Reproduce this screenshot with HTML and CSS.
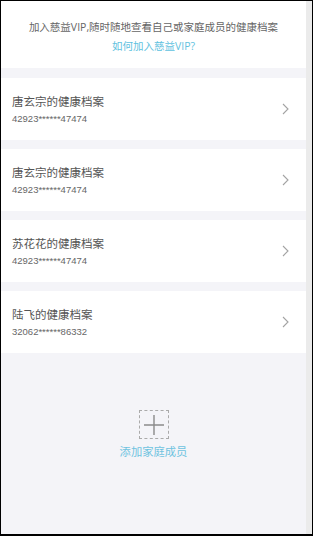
FILE: index.html
```html
<!DOCTYPE html>
<html lang="zh-CN">
<head>
<meta charset="utf-8">
<title>健康档案</title>
<link rel="stylesheet" href="styles.css">
</head>
<body>
<div class="frame">
  <div class="page">
    <div class="header">
      <p class="intro">加入慈益VIP,随时随地查看自己或家庭成员的健康档案</p>
      <p class="how">如何加入慈益VIP?</p>
    </div>
    <div class="list">
      <div class="card">
        <div class="info">
          <div class="name">唐玄宗的健康档案</div>
          <div class="id">42923******47474</div>
        </div>
        <svg class="chev" width="7" height="12" viewBox="0 0 7 12"><path d="M1 1 L6 6 L1 11" fill="none" stroke="#a3a3a3" stroke-width="1.1"/></svg>
      </div>
      <div class="card">
        <div class="info">
          <div class="name">唐玄宗的健康档案</div>
          <div class="id">42923******47474</div>
        </div>
        <svg class="chev" width="7" height="12" viewBox="0 0 7 12"><path d="M1 1 L6 6 L1 11" fill="none" stroke="#a3a3a3" stroke-width="1.1"/></svg>
      </div>
      <div class="card">
        <div class="info">
          <div class="name">苏花花的健康档案</div>
          <div class="id">42923******47474</div>
        </div>
        <svg class="chev" width="7" height="12" viewBox="0 0 7 12"><path d="M1 1 L6 6 L1 11" fill="none" stroke="#a3a3a3" stroke-width="1.1"/></svg>
      </div>
      <div class="card">
        <div class="info">
          <div class="name">陆飞的健康档案</div>
          <div class="id">32062******86332</div>
        </div>
        <svg class="chev" width="7" height="12" viewBox="0 0 7 12"><path d="M1 1 L6 6 L1 11" fill="none" stroke="#a3a3a3" stroke-width="1.1"/></svg>
      </div>
    </div>
    <div class="add">
      <div class="add-box">
        <svg width="20" height="20" viewBox="0 0 20 20"><path d="M0 10 H20 M10 0 V20" stroke="#8a8a8a" stroke-width="1.4" fill="none"/></svg>
      </div>
      <div class="add-text">添加家庭成员</div>
    </div>
  </div>
  <div class="scrollbar"></div>
</div>
</body>
</html>
```

FILE: styles.css
```css
html, body {
  margin: 0;
  padding: 0;
}
body {
  font-family: "Open Sans", "Noto Sans CJK SC", sans-serif;
  background: #fff;
}
.frame {
  width: 313px;
  height: 536px;
  box-sizing: border-box;
  border: 1px solid #000;
  border-bottom-width: 2px;
  display: flex;
  overflow: hidden;
}
.page {
  flex: 1;
  background: #f4f4f8;
  display: flex;
  flex-direction: column;
}
.scrollbar {
  width: 6px;
  background: #ebebeb;
}
.header {
  background: #fff;
  height: 67px;
  box-sizing: border-box;
  padding-top: 17px;
  text-align: center;
}
.header p {
  margin: 0;
  font-size: 10.5px;
  line-height: 19px;
  white-space: nowrap;
}
.intro {
  color: #666;
}
.how {
  color: #5fc2e0;
}
.list {
  display: flex;
  flex-direction: column;
  gap: 9px;
  margin-top: 10px;
}
.card {
  background: #fff;
  height: 62px;
  box-sizing: border-box;
  padding: 0 17px 0 11px;
  display: flex;
  align-items: center;
  justify-content: space-between;
}
.info {
  display: flex;
  flex-direction: column;
  padding-top: 1px;
}
.name {
  font-size: 11.5px;
  line-height: 17px;
  color: #555;
}
.id {
  font-family: "Liberation Sans", "Noto Sans CJK SC", sans-serif;
  font-size: 9.5px;
  line-height: 16px;
  margin-top: 1px;
  color: #666;
}
.chev {
  display: block;
}
.add {
  display: flex;
  flex-direction: column;
  align-items: center;
  margin-top: 57px;
}
.add-box {
  width: 30px;
  height: 29px;
  box-sizing: border-box;
  border: 1px dashed #aaa;
  display: flex;
  align-items: center;
  justify-content: center;
}
.add-box svg {
  display: block;
}
.add-text {
  margin-top: 5px;
  font-size: 11.3px;
  line-height: 16px;
  color: #6ec3e0;
}
```
